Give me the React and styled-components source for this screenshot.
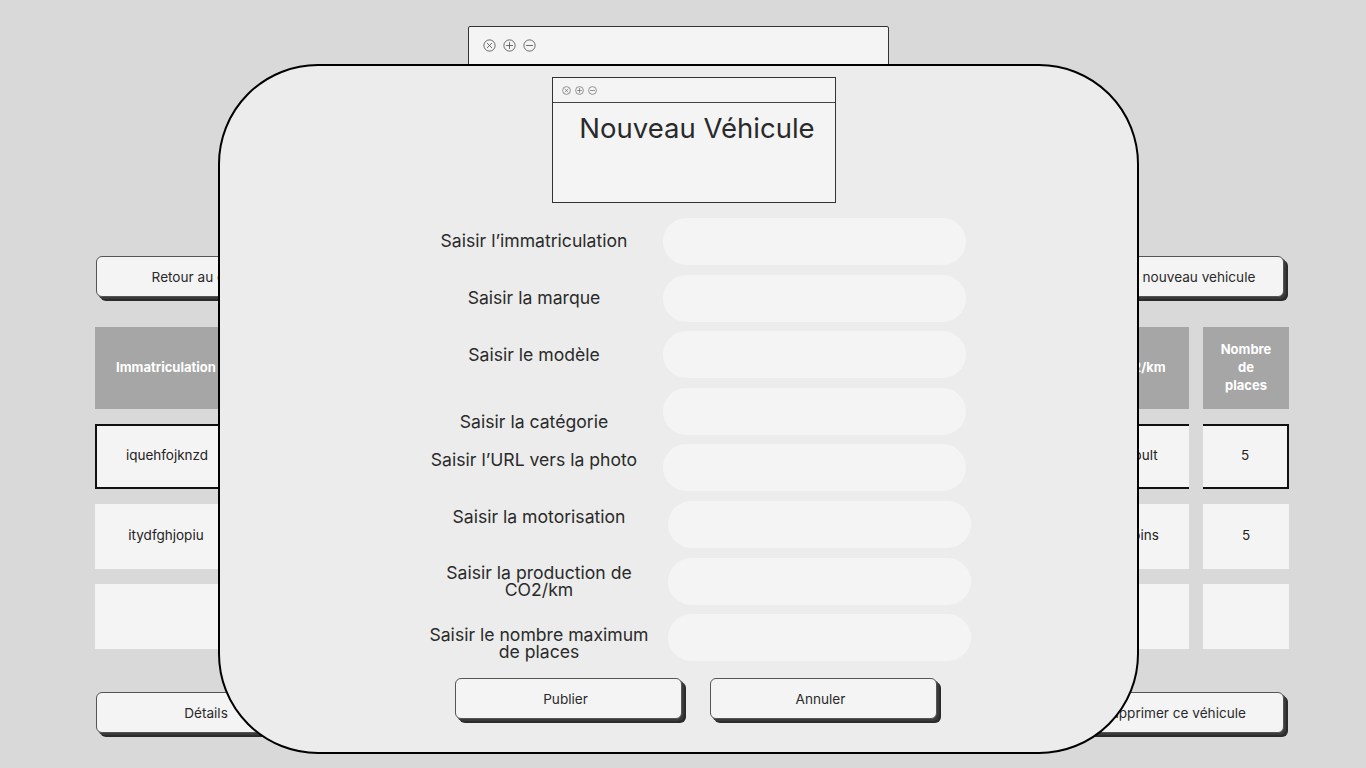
import React from "react";
import styled, { createGlobalStyle } from "styled-components";

const Global = createGlobalStyle`
  html, body { margin: 0; padding: 0; background: #d9d9d9; }
  body { font-family: Inter, "Noto Sans", "Liberation Sans", sans-serif; color: #262626; }
  * { box-sizing: border-box; }
`;

const Page = styled.div`
  position: relative;
  width: 1366px;
  height: 768px;
  overflow: hidden;
  padding: 26px 77px 0 95px;
  display: flex;
  flex-direction: column;
`;

const BackWindow = styled.div`
  margin-left: 373px;
  width: 421px;
  height: 200px;
  background: #f4f4f4;
  border: 1.5px solid #333;
  border-radius: 2px;
  display: flex;
  flex-direction: column;
`;

const TitleBar = styled.div`
  height: ${p => p.$h}px;
  display: flex;
  align-items: center;
  gap: ${p => p.$gap}px;
  padding-left: ${p => p.$pad}px;
  border-bottom: ${p => (p.$line ? "1.5px solid #444" : "none")};
  flex-shrink: 0;
`;

const ButtonRow = styled.div`
  display: flex;
  justify-content: space-between;
  margin-top: ${p => p.$mt}px;
  padding: 0 1px 0 1px;
`;

const ShadowButton = styled.button`
  width: ${p => p.$w}px;
  height: 41px;
  margin-right: 4px;
  background: #f4f4f4;
  border: 1px solid #555;
  border-radius: 6px;
  box-shadow: 2px 2px 0 #3a3a3a, 4px 4px 0 #2b2b2b;
  font-family: Inter, "Noto Sans", sans-serif;
  font-size: 13.6px;
  color: #2a2a2a;
  display: flex;
  align-items: center;
  justify-content: center;
  padding: 0 ${p => p.$pr || 0}px 0 0;
  cursor: pointer;
`;

const Table = styled.div`
  margin-top: 30px;
  display: grid;
  grid-template-columns: 142px repeat(4, 1fr) 99px 86px;
  column-gap: 14px;
  row-gap: 15px;
`;

const HeadCell = styled.div`
  height: 82px;
  background: #a6a6a6;
  color: #fff;
  font-weight: 700;
  font-size: 13px;
  line-height: 18px;
  display: flex;
  align-items: center;
  justify-content: center;
  text-align: center;
  padding: 0 14px 2px;
`;

const Cell = styled.div`
  height: 65px;
  background: #f4f4f4;
  font-size: 13.5px;
  color: #222;
  display: flex;
  align-items: center;
  justify-content: center;
  padding-bottom: 3px;
  border-top: ${p => (p.$sel ? "2px solid #111" : "none")};
  border-bottom: ${p => (p.$sel ? "2px solid #111" : "none")};
  border-left: ${p => (p.$sel && p.$first ? "2px solid #111" : "none")};
  border-right: ${p => (p.$sel && p.$last ? "2px solid #111" : "none")};
`;

const Modal = styled.div`
  position: absolute;
  left: 218px;
  top: 64px;
  width: 921px;
  height: 690px;
  background: #ececec;
  border: 2px solid #000;
  border-radius: 100px;
  display: flex;
  flex-direction: column;
  padding-top: 11px;
`;

const FormWindow = styled.div`
  margin-left: 332px;
  width: 284px;
  height: 126px;
  background: #f4f4f4;
  border: 1.5px solid #333;
  display: flex;
  flex-direction: column;
`;

const WindowTitle = styled.h1`
  margin: 0;
  padding-top: 8px;
  font-weight: 400;
  font-size: 27.5px;
  line-height: 34px;
  text-align: center;
  color: #2a2a2a;
  padding-left: 6px;
`;

const Form = styled.div`
  margin-top: 15px;
  margin-left: 196px;
  display: flex;
  flex-direction: column;
  gap: 9.6px;
`;

const FieldRow = styled.div`
  display: grid;
  grid-template-columns: 236px 303px;
  column-gap: 11px;
  align-items: center;
  margin-left: ${p => p.$shift}px;
`;

const Label = styled.label`
  text-align: center;
  font-size: 17.6px;
  line-height: 17px;
  color: #2a2a2a;
  margin-top: ${p => (p.$dy > 0 ? p.$dy * 2 : 0)}px;
  margin-bottom: ${p => (p.$dy < 0 ? -p.$dy * 2 : 0)}px;
`;

const Input = styled.input`
  height: 47px;
  border: none;
  outline: none;
  border-radius: 24px;
  background: #f4f4f4;
  padding: 0 20px;
  font-family: inherit;
  font-size: 15px;
`;

const ActionRow = styled.div`
  margin-top: 17px;
  margin-left: 235px;
  display: flex;
  gap: 24px;
`;

const WinIcon = ({ type, size }) => (
  <svg width={size} height={size} viewBox="0 0 12 12">
    <circle cx="6" cy="6" r="5.2" fill="none" stroke="#555" strokeWidth="0.8" />
    {type === "x" && (
      <path d="M4 4 L8 8 M8 4 L4 8" stroke="#555" strokeWidth="0.8" strokeLinecap="round" />
    )}
    {type === "plus" && (
      <path d="M6 3.2 V8.8 M3.2 6 H8.8" stroke="#555" strokeWidth="0.8" strokeLinecap="round" />
    )}
    {type === "minus" && (
      <path d="M3.2 6 H8.8" stroke="#555" strokeWidth="0.8" strokeLinecap="round" />
    )}
  </svg>
);

const WindowIcons = ({ size }) => (
  <>
    <WinIcon type="x" size={size} />
    <WinIcon type="plus" size={size} />
    <WinIcon type="minus" size={size} />
  </>
);

const headers = [
  "Immatriculation",
  "Marque",
  "Modèle",
  "Catégorie",
  "Motorisation",
  "CO2/km",
  "Nombre de places",
];

const rows = [
  { sel: true, cells: ["iquehfojknzd", "Peugeot", "208", "Citadine", "Essence", "Moult", "5"] },
  { sel: false, cells: ["itydfghjopiu", "Renault", "Clio", "Citadine", "Diesel", "Moins", "5"] },
  { sel: false, cells: ["", "", "", "", "", "", ""] },
];

const fields = [
  { label: "Saisir l’immatriculation", dy: -1, shift: 0 },
  { label: "Saisir la marque", dy: -1, shift: 0 },
  { label: "Saisir le modèle", dy: 0, shift: 0 },
  { label: "Saisir la catégorie", dy: 10, shift: 0 },
  { label: "Saisir l’URL vers la photo", dy: -8, shift: 0 },
  { label: "Saisir la motorisation", dy: -8, shift: 5 },
  { label: <>Saisir la production de<br />CO2/km</>, dy: 0, shift: 5 },
  { label: <>Saisir le nombre maximum<br />de places</>, dy: 5, shift: 5 },
];

export default function App() {
  return (
    <>
      <Global />
      <Page>
        <BackWindow>
          <TitleBar $h={36} $gap={7} $pad={14}>
            <WindowIcons size={13} />
          </TitleBar>
        </BackWindow>

        <ButtonRow $mt={30}>
          <ShadowButton $w={240}>Retour au catalogue</ShadowButton>
          <ShadowButton $w={240}>Ajouter un nouveau vehicule</ShadowButton>
        </ButtonRow>

        <Table>
          {headers.map(h => (
            <HeadCell key={h}>{h}</HeadCell>
          ))}
          {rows.map((r, ri) =>
            r.cells.map((c, ci) => (
              <Cell
                key={ri + "-" + ci}
                $sel={r.sel}
                $first={ci === 0}
                $last={ci === r.cells.length - 1}
              >
                {c}
              </Cell>
            ))
          )}
        </Table>

        <ButtonRow $mt={43}>
          <ShadowButton $w={220}>Détails</ShadowButton>
          <ShadowButton $w={220}>Supprimer ce véhicule</ShadowButton>
        </ButtonRow>

        <Modal>
          <FormWindow>
            <TitleBar $h={25} $gap={4} $pad={9} $line>
              <WindowIcons size={9} />
            </TitleBar>
            <WindowTitle>Nouveau Véhicule</WindowTitle>
          </FormWindow>

          <Form>
            {fields.map((f, i) => (
              <FieldRow key={i} $shift={f.shift}>
                <Label $dy={f.dy}>{f.label}</Label>
                <Input />
              </FieldRow>
            ))}
          </Form>

          <ActionRow>
            <ShadowButton $w={227} $pr={6}>Publier</ShadowButton>
            <ShadowButton $w={227} $pr={6}>Annuler</ShadowButton>
          </ActionRow>
        </Modal>
      </Page>
    </>
  );
}
